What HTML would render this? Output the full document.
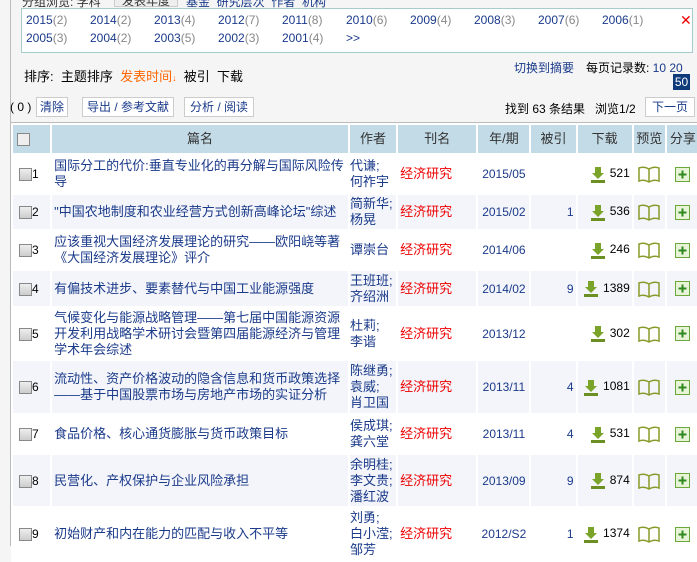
<!DOCTYPE html>
<html><head><meta charset="utf-8"><style>
*{margin:0;padding:0;box-sizing:border-box}
body{width:697px;height:546px;overflow:hidden;background:#f5f5f5;font-family:"Liberation Sans","Noto Sans CJK SC",sans-serif;font-size:12px;color:#000;position:relative}
.lb{position:absolute;left:10px;top:0;width:1px;height:546px;background:#bbb}
.years{position:absolute;left:21px;top:8px;width:672px;height:45px;background:#fff;border:1px solid #a8cccc}
.years span{position:absolute;color:#1a3a8a;font-size:12px}
.years span i{font-style:normal;color:#888}
.a{position:absolute;white-space:nowrap}
.btn{position:absolute;top:97px;height:20px;border:1px solid #ccc;background:#fff;line-height:18px;text-align:center;color:#1a3a8a;white-space:nowrap;font-size:12px}
table{position:absolute;left:11px;top:122px;border-collapse:separate;border-spacing:2px;table-layout:fixed;width:690px;background:#fff;border-top:1px solid #bbb}
td{vertical-align:middle;color:#1a3a8a;line-height:16px;overflow:hidden;font-size:13px}
tr.h td{background:#c3dbe7;color:#333;text-align:center;height:28px}
tr.o td{background:#fff}
tr.e td{background:#f3f5fa}
.cb{display:inline-block;width:13px;height:13px;border:1px solid #888;background:linear-gradient(#eee,#ccc);vertical-align:middle}
.ck{padding-left:6px;color:#000;font-size:12px}
.t{padding-left:2px}
.au{word-break:break-all}
.j{color:#e00;padding-left:2px}
.y{text-align:center;font-size:12px}
.c{text-align:right;padding-right:2px;font-size:12px}
.d{color:#000;text-align:right;padding-right:2px;white-space:nowrap;font-size:12px}
.dl{display:inline-block;vertical-align:middle;margin-right:4px}
</style></head><body>
<div class="lb"></div>
<div class="a" style="left:22px;top:-7px;color:#333">分组浏览: 学科</div>
<div class="a" style="left:114px;top:-9px;width:64px;height:16px;border:1px solid #ccc;background:#eee;text-align:center;color:#333">发表年度</div>
<div class="a" style="left:186px;top:-7px;color:#1a3a8a">基金 &nbsp;研究层次 &nbsp;作者 &nbsp;机构</div>
<div class="years">
<span style="left:4px;top:4px">2015<i>(2)</i></span>
<span style="left:68px;top:4px">2014<i>(2)</i></span>
<span style="left:132px;top:4px">2013<i>(4)</i></span>
<span style="left:196px;top:4px">2012<i>(7)</i></span>
<span style="left:260px;top:4px">2011<i>(8)</i></span>
<span style="left:324px;top:4px">2010<i>(6)</i></span>
<span style="left:388px;top:4px">2009<i>(4)</i></span>
<span style="left:452px;top:4px">2008<i>(3)</i></span>
<span style="left:516px;top:4px">2007<i>(6)</i></span>
<span style="left:580px;top:4px">2006<i>(1)</i></span>
<span style="left:658px;top:3px;color:#e00;font-size:14px">✕</span>
<span style="left:4px;top:22px">2005<i>(3)</i></span>
<span style="left:68px;top:22px">2004<i>(2)</i></span>
<span style="left:132px;top:22px">2003<i>(5)</i></span>
<span style="left:196px;top:22px">2002<i>(3)</i></span>
<span style="left:260px;top:22px">2001<i>(4)</i></span>
<span style="left:324px;top:22px">&gt;&gt;</span>
</div>
<div class="a" style="left:24px;top:66px;font-size:13px">排序: &nbsp;主题排序 &nbsp;<span style="color:#f60">发表时间<span style="font-size:9px">↓</span></span>&nbsp; 被引 &nbsp;下载</div>
<div class="a" style="left:514px;top:59px;color:#1a3a8a">切换到摘要</div>
<div class="a" style="left:586px;top:59px;color:#000">每页记录数: <span style="color:#1a3a8a">10 20</span></div>
<div class="a" style="left:673px;top:74px;width:17px;height:16px;background:#0e3a7a;color:#fff;text-align:center;line-height:16px">50</div>
<div class="a" style="left:10px;top:100px">( 0 )</div>
<div class="btn" style="left:36px;width:32px">清除</div>
<div class="btn" style="left:82px;width:92px">导出 / 参考文献</div>
<div class="btn" style="left:184px;width:70px">分析 / 阅读</div>
<div class="a" style="left:505px;top:100px;font-size:12px">找到 63 条结果 &nbsp; 浏览1/2</div>
<div class="btn" style="left:645px;width:50px">下一页</div>
<table>
<colgroup><col style="width:37px"><col style="width:295px"><col style="width:46px"><col style="width:78px"><col style="width:51px"><col style="width:44px"><col style="width:54px"><col style="width:31px"><col style="width:32px"></colgroup>
<tr class="h"><td style="text-align:left;padding-left:4px"><span class="cb" style="background:#eee"></span></td><td>篇名</td><td>作者</td><td>刊名</td><td>年/期</td><td>被引</td><td>下载</td><td>预览</td><td>分享</td></tr>
<tr class="o" style="height:38px"><td class="ck"><span class="cb"></span>1</td><td class="t">国际分工的代价:垂直专业化的再分解与国际风险传导</td><td class="au">代谦;<br>何祚宇</td><td class="j">经济研究</td><td class="y">2015/05</td><td class="c"></td><td class="d">DL521</td><td>PV</td><td>SH</td></tr>
<tr class="e" style="height:34px"><td class="ck"><span class="cb"></span>2</td><td class="t">"中国农地制度和农业经营方式创新高峰论坛"综述</td><td class="au">简新华;<br>杨晃</td><td class="j">经济研究</td><td class="y">2015/02</td><td class="c">1</td><td class="d">DL536</td><td>PV</td><td>SH</td></tr>
<tr class="o" style="height:38px"><td class="ck"><span class="cb"></span>3</td><td class="t">应该重视大国经济发展理论的研究——欧阳峣等著<br>《大国经济发展理论》评介</td><td class="au">谭崇台</td><td class="j">经济研究</td><td class="y">2014/06</td><td class="c"></td><td class="d">DL246</td><td>PV</td><td>SH</td></tr>
<tr class="e" style="height:35px"><td class="ck"><span class="cb"></span>4</td><td class="t">有偏技术进步、要素替代与中国工业能源强度</td><td class="au">王班班;<br>齐绍洲</td><td class="j">经济研究</td><td class="y">2014/02</td><td class="c">9</td><td class="d">DL1389</td><td>PV</td><td>SH</td></tr>
<tr class="o" style="height:51px"><td class="ck"><span class="cb"></span>5</td><td class="t">气候变化与能源战略管理——第七届中国能源资源开发利用战略学术研讨会暨第四届能源经济与管理学术年会综述</td><td class="au">杜莉;<br>李谐</td><td class="j">经济研究</td><td class="y">2013/12</td><td class="c"></td><td class="d">DL302</td><td>PV</td><td>SH</td></tr>
<tr class="e" style="height:52px"><td class="ck"><span class="cb"></span>6</td><td class="t">流动性、资产价格波动的隐含信息和货币政策选择——基于中国股票市场与房地产市场的实证分析</td><td class="au">陈继勇;<br>袁威;<br>肖卫国</td><td class="j">经济研究</td><td class="y">2013/11</td><td class="c">4</td><td class="d">DL1081</td><td>PV</td><td>SH</td></tr>
<tr class="o" style="height:38px"><td class="ck"><span class="cb"></span>7</td><td class="t">食品价格、核心通货膨胀与货币政策目标</td><td class="au">侯成琪;<br>龚六堂</td><td class="j">经济研究</td><td class="y">2013/11</td><td class="c">4</td><td class="d">DL531</td><td>PV</td><td>SH</td></tr>
<tr class="e" style="height:51px"><td class="ck"><span class="cb"></span>8</td><td class="t">民营化、产权保护与企业风险承担</td><td class="au">余明桂;<br>李文贵;<br>潘红波</td><td class="j">经济研究</td><td class="y">2013/09</td><td class="c">9</td><td class="d">DL874</td><td>PV</td><td>SH</td></tr>
<tr class="o" style="height:52px"><td class="ck"><span class="cb"></span>9</td><td class="t">初始财产和内在能力的匹配与收入不平等</td><td class="au">刘勇;<br>白小滢;<br>邹芳</td><td class="j">经济研究</td><td class="y">2012/S2</td><td class="c">1</td><td class="d">DL1374</td><td>PV</td><td>SH</td></tr>
</table>
<script>
var dl='<svg class="dl" width="16" height="17" viewBox="0 0 16 17"><path d="M5 1h6v6h3l-6 6-6-6h3z" fill="#7aa32a"/><rect x="1" y="14" width="14" height="3" fill="#6b8f22"/></svg>';
var pv='<svg width="24" height="18" viewBox="0 0 24 18" style="display:block;margin:auto"><path d="M2 3q5-2 10 1q5-3 10-1v13q-5-2-10 1q-5-3-10-1z M12 4v13" fill="none" stroke="#8a9a2a" stroke-width="1.5"/></svg>';
var sh='<svg width="15" height="15" viewBox="0 0 15 15" style="display:block;margin:auto"><rect x="0.5" y="0.5" width="14" height="14" fill="#e8f4d8" stroke="#6aa83a"/><path d="M7.5 3.5v8M3.5 7.5h8" stroke="#2e8a1e" stroke-width="2"/></svg>';
document.querySelectorAll('td').forEach(function(td){
var t=td.innerHTML;
if(t.indexOf('DL')==0)td.innerHTML=dl+t.slice(2);
else if(t=='PV')td.innerHTML=pv;
else if(t=='SH')td.innerHTML=sh;
});
</script>
</body></html>
